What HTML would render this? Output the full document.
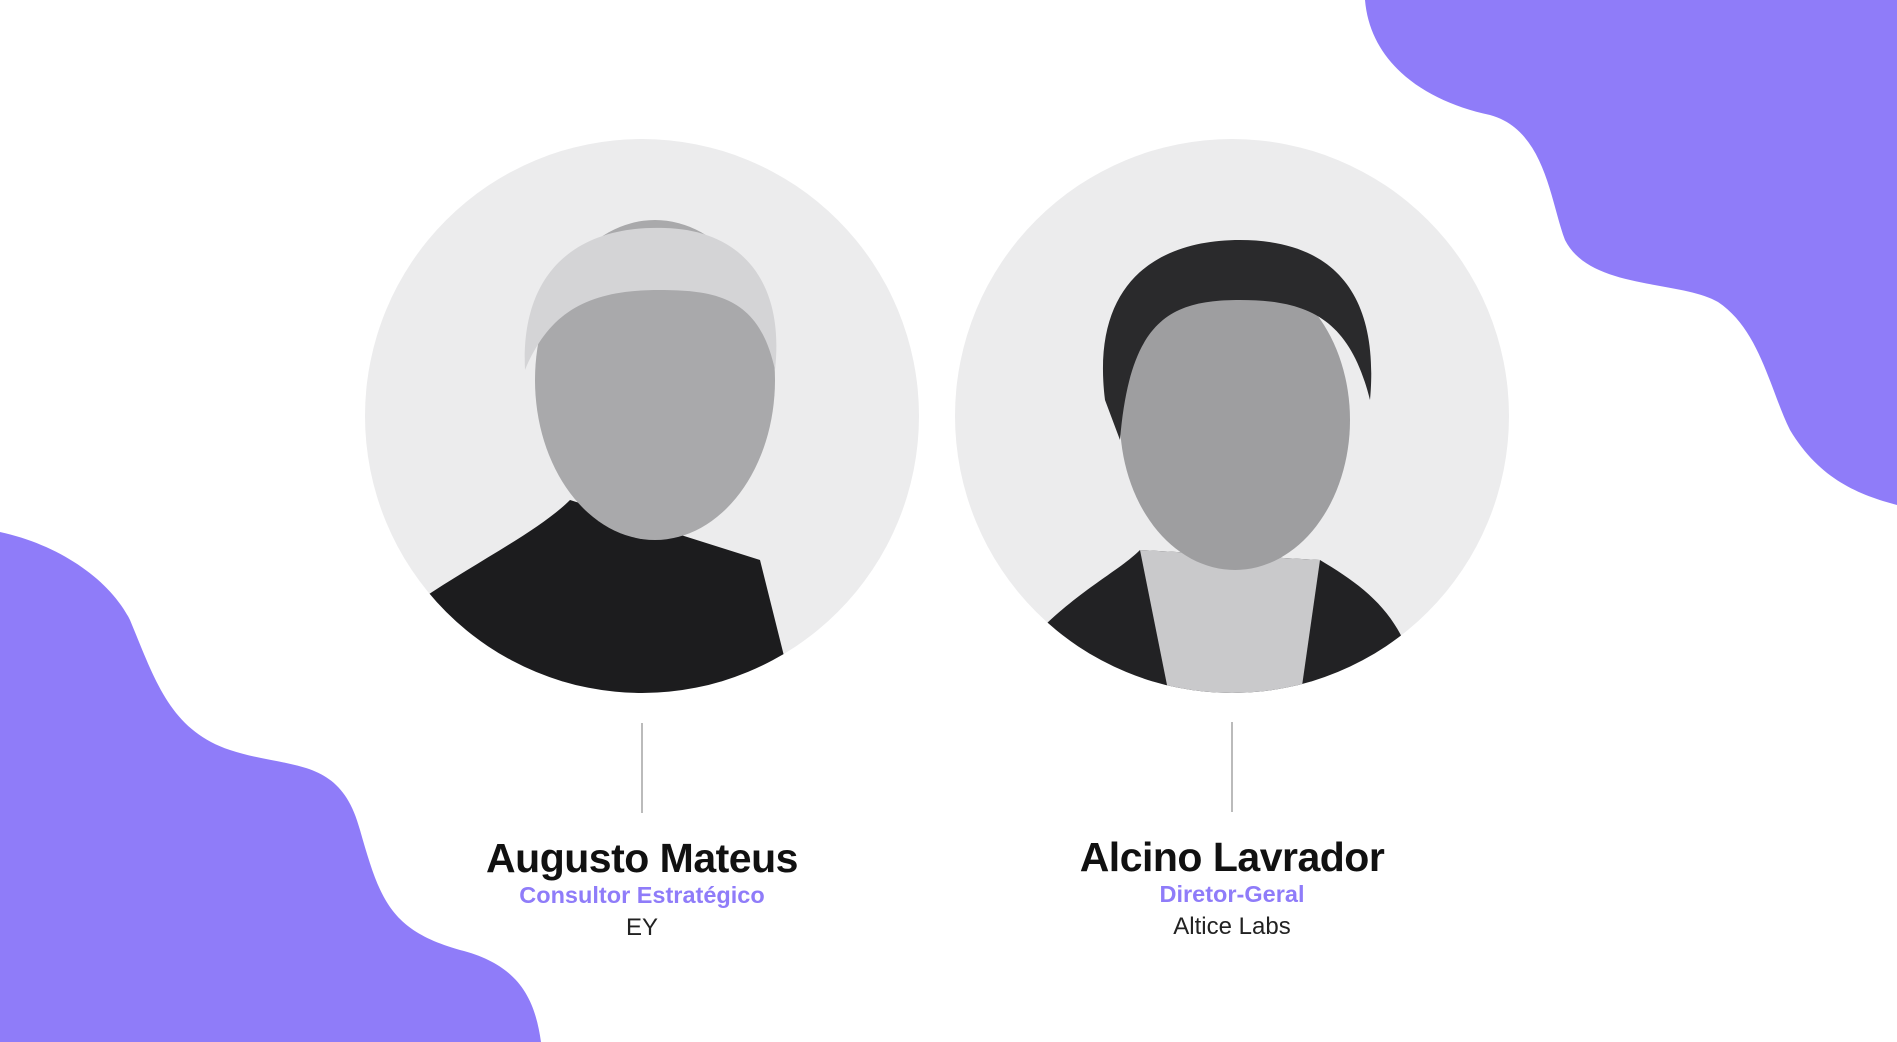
<!DOCTYPE html>
<html><head><meta charset="utf-8"><style>
html,body{margin:0;padding:0;width:1897px;height:1042px;overflow:hidden;background:#fff;font-family:"Liberation Sans",sans-serif}
.t{position:absolute;text-align:center;width:600px}
.n{font-size:41px;font-weight:bold;color:#111;letter-spacing:-0.5px}
.r{font-size:23.5px;font-weight:bold;color:#8f7cf9}
.c{font-size:24px;color:#222}
.l{position:absolute;width:2px;background:#bbb}
</style></head><body>
<svg width="1897" height="1042" style="position:absolute;left:0;top:0">
<path d="M1365 0 C1370 60 1420 100 1490 115 C1545 130 1550 200 1565 240 C1590 290 1680 280 1718 302 C1760 330 1770 390 1790 430 C1820 480 1860 495 1897 505 L1897 0 Z" fill="#8f7cf9"/>
<path d="M0 532 C60 545 110 580 130 620 C155 680 170 730 230 750 C290 770 340 755 360 830 C380 900 390 930 460 950 C520 965 535 1000 541 1042 L0 1042 Z" fill="#8f7cf9"/>
<defs>
<clipPath id="c1"><circle cx="642" cy="416" r="277"/></clipPath>
<clipPath id="c2"><circle cx="1232" cy="416" r="277"/></clipPath>
</defs>
<circle cx="642" cy="416" r="277" fill="#ececed"/>
<g clip-path="url(#c1)">
<path d="M420 600 C480 560 540 530 570 500 L760 560 L800 720 L400 720 Z" fill="#1c1c1e"/>
<ellipse cx="655" cy="380" rx="120" ry="160" fill="#a9a9ab"/>
<path d="M525 370 C520 260 590 225 665 228 C740 230 785 280 775 370 C760 300 720 290 660 290 C590 290 550 310 525 370Z" fill="#d4d4d6"/>
</g>
<circle cx="1232" cy="416" r="277" fill="#ececed"/>
<g clip-path="url(#c2)">
<path d="M1040 630 C1080 590 1120 570 1140 550 L1320 560 C1370 590 1410 620 1420 700 L1040 720 Z" fill="#222224"/>
<path d="M1140 550 L1320 560 L1300 700 L1170 700 Z" fill="#c9c9cb"/>
<ellipse cx="1235" cy="420" rx="115" ry="150" fill="#9e9ea0"/>
<path d="M1105 400 C1090 280 1160 240 1240 240 C1330 240 1380 290 1370 400 C1350 320 1310 300 1240 300 C1170 300 1130 320 1120 440Z" fill="#2a2a2c"/>
</g>
</svg>
<div class="l" style="left:641px;top:723px;height:90px"></div>
<div class="l" style="left:1231px;top:722px;height:90px"></div>
<div class="t n" style="left:342px;top:835px">Augusto Mateus</div>
<div class="t r" style="left:342px;top:882px">Consultor Estratégico</div>
<div class="t c" style="left:342px;top:914px">EY</div>
<div class="t n" style="left:932px;top:834px">Alcino Lavrador</div>
<div class="t r" style="left:932px;top:881px">Diretor-Geral</div>
<div class="t c" style="left:932px;top:913px">Altice Labs</div>
</body></html>
